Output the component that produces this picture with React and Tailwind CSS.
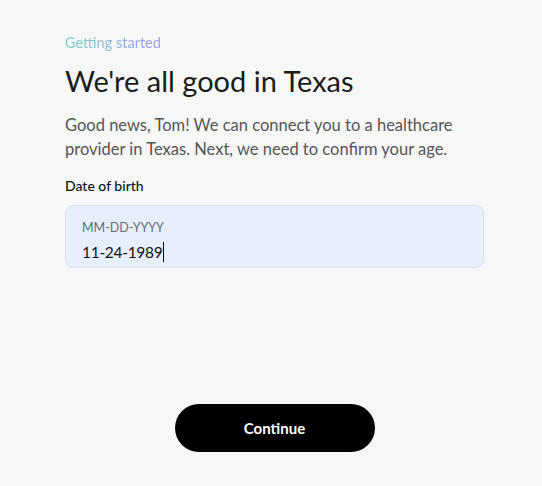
export default function App() {
  return (
    <div className="min-h-[486px] w-full bg-[#f7f7f7] font-['Lato',sans-serif]">
      <div className="flex w-[549px] flex-col px-[65px] pt-[33px]">
        <div className="w-fit bg-gradient-to-r from-[#6fd3c4] to-[#9a94e8] bg-clip-text text-[14.5px] leading-[20px] text-transparent">
          Getting started
        </div>
        <h1 className="mt-[9px] text-[29px] leading-[38px] font-normal text-[#1b1b1b]">
          We're all good in Texas
        </h1>
        <p className="mt-[13px] text-[16.5px] leading-[24px] text-[#555555]">
          Good news, Tom! We can connect you to a healthcare provider in Texas. Next, we need to confirm your age.
        </p>
        <label className="mt-[15px] text-[14px] leading-[20px] font-medium text-[#111111]">
          Date of birth
        </label>
        <div className="mt-[9px] h-[63px] w-[419px] rounded-[8px] border border-[#d9e2f2] bg-[#e8effc] px-[16px] pt-[13px]">
          <div className="text-[12.5px] leading-[18px] text-[#666a73]">MM-DD-YYYY</div>
          <div className="mt-[4px] flex items-center text-[15.5px] leading-[22px] tracking-[-0.3px] text-[#111111]">
            <span>11-24-1989</span>
            <span className="ml-px inline-block h-[20px] w-px bg-black" />
          </div>
        </div>
        <div className="mt-[136px] flex justify-center">
          <button className="h-[48px] w-[200px] rounded-full bg-black text-[15px] font-bold text-white">
            Continue
          </button>
        </div>
      </div>
    </div>
  );
}
